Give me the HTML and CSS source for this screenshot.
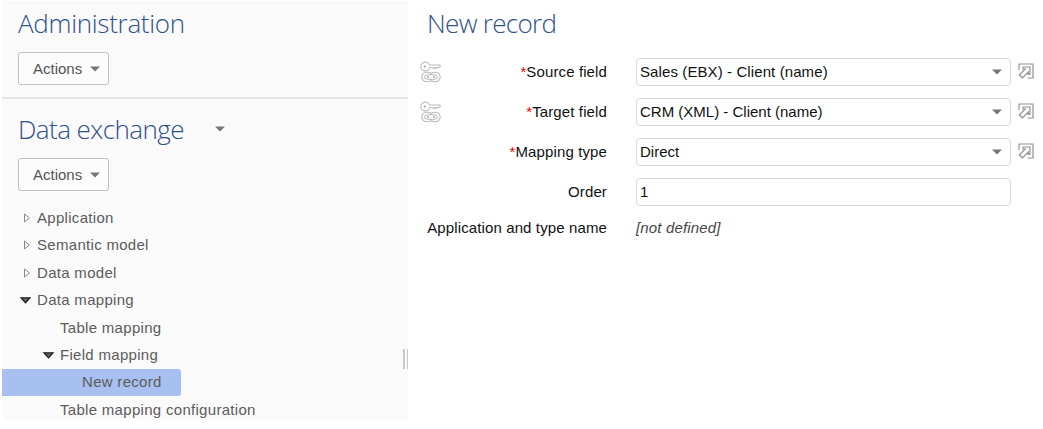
FILE: index.html
```
<!DOCTYPE html>
<html lang="en">
<head>
<meta charset="utf-8">
<title>Data exchange</title>
<link rel="stylesheet" href="styles.css">
</head>
<body>
<svg width="0" height="0" class="defs">
  <symbol id="caret" viewBox="0 0 10 6"><path d="M0 0.5h10L5 5.5z" fill="#777"/></symbol>
  <symbol id="closed" viewBox="0 0 8 10"><path d="M1.5 1v8L6.5 5z" fill="#fff" stroke="#888"/></symbol>
  <symbol id="open" viewBox="0 0 11 7"><path d="M1 .8h9L5.500 5.800z" fill="#666" stroke="#222" stroke-width="1.300"/></symbol>
  <symbol id="key" viewBox="0 0 22 22">
    <g fill="none" stroke="#bbb" stroke-width="1.100">
      <path d="M9.500 4H19.500L20.500 5L19 6.500H17.500L16.500 7.500L15.500 6.500L14 7.500L12.500 6.500H9.700A4.500 4.500 0 1 1 9.500 4z"/>
      <path d="M11 12.300C9.800 11.500 8.500 11.300 6.500 11.300A4.700 4.700 0 0 0 6.500 20.700C8.500 20.700 9.800 20.500 11 19.700C12.200 20.500 13.500 20.700 15.500 20.700A4.700 4.700 0 0 0 15.500 11.300C13.500 11.300 12.200 11.500 11 12.300z"/>
      <ellipse cx="11" cy="16" rx="6.300" ry="2.500"/>
    </g>
    <path d="M3.800 4.500h2v2h-2zM7 15.300h2v1.400H7zM13 15.300h2v1.400h-2z" fill="#aaa"/>
  </symbol>
  <symbol id="goto" viewBox="0 0 16 16">
    <g fill="none" stroke="#929292" stroke-width="1.200">
      <path d="M1 7V1H15V15H9.500"/>
      <path d="M5 4H12V11.500H10.300V9L4.500 14.800L1.300 11.800L7.200 6H5z"/>
    </g>
  </symbol>
</svg>
<div class="app">
  <aside class="sidebar">
    <section class="admin">
      <h1 class="title title-admin">Administration</h1>
      <button class="actions">Actions<svg class="caret"><use href="#caret"/></svg></button>
    </section>
    <section class="exchange">
      <h1 class="title title-exchange">Data exchange<svg class="caret"><use href="#caret"/></svg></h1>
      <button class="actions">Actions<svg class="caret"><use href="#caret"/></svg></button>
    </section>
    <nav class="tree">
      <div class="node"><svg class="closed"><use href="#closed"/></svg>Application</div>
      <div class="node"><svg class="closed"><use href="#closed"/></svg>Semantic model</div>
      <div class="node"><svg class="closed"><use href="#closed"/></svg>Data model</div>
      <div class="node"><svg class="open"><use href="#open"/></svg>Data mapping</div>
      <div class="node level-2">Table mapping</div>
      <div class="node level-2"><svg class="open"><use href="#open"/></svg>Field mapping</div>
      <div class="node level-3"><span class="selected">New record</span></div>
      <div class="node level-2">Table mapping configuration</div>
    </nav>
    <div class="grip"></div>
  </aside>
  <main class="main">
    <h1 class="title title-record">New record</h1>
    <div class="row"><svg class="key"><use href="#key"/></svg><label><b>*</b>Source field</label><div class="field sales"><span>Sales (EBX) - Client (name)</span><svg class="caret"><use href="#caret"/></svg></div><svg class="goto"><use href="#goto"/></svg></div>
    <div class="row"><svg class="key"><use href="#key"/></svg><label><b>*</b>Target field</label><div class="field"><span>CRM (XML) - Client (name)</span><svg class="caret"><use href="#caret"/></svg></div><svg class="goto"><use href="#goto"/></svg></div>
    <div class="row"><i></i><label><b>*</b>Mapping type</label><div class="field"><span>Direct</span><svg class="caret"><use href="#caret"/></svg></div><svg class="goto"><use href="#goto"/></svg></div>
    <div class="row"><i></i><label>Order</label><div class="field">1</div></div>
    <div class="row last"><i></i><label>Application and type name</label><em>[not defined]</em></div>
  </main>
</div>
</body>
</html>
```
FILE: styles.css
```
* { box-sizing: border-box; }
body { margin: 0; background: #fff; font: 15px/20px "Liberation Sans", Arial, sans-serif; overflow: hidden; }
.defs { position: absolute; }
.app { display: flex; height: 429px; padding: 1px 0 9px 2px; white-space: nowrap; }
.sidebar { position: relative; flex: none; width: 406px; height: 419px; background: #fafafa; color: #5c5c5c; overflow: hidden; }
.title { margin: 0; font: 300 26px/36px "Open Sans", "Noto Sans", sans-serif; letter-spacing: -.3px; color: #31508c; }
.admin { height: 98px; padding: 4px 0 0 16px; border-bottom: 2px solid #e5e5e5; }
.exchange { height: 105px; padding: 12px 0 0 16px; }
.title-exchange { display: flex; align-items: center; gap: 31px; letter-spacing: -.55px; }
.caret { width: 10px; height: 6px; flex: none; }
.actions { display: flex; align-items: center; gap: 8px; width: 91px; height: 33px; margin-top: 11px; padding: 1px 0 0 14px; border: 1px solid #c0c0c0; border-radius: 3px; background: #fcfcfc; color: #555; font: 15px/20px "Liberation Sans", Arial, sans-serif; }
.tree { letter-spacing: .3px; }
.node { display: flex; align-items: center; height: 27.5px; padding-left: 21px; }
.closed { width: 8px; height: 10px; margin-right: 6px; }
.open { width: 11px; height: 7px; margin: 0 6px 0 -3px; }
.level-2 { padding-left: 58px; }
.level-2 .open { margin-left: -17px; }
.level-3 { padding: 0; }
.selected { width: 179px; height: 27px; padding: 3px 0 0 80px; border-radius: 0 3px 3px 0; background: #a8c0f0; }
.grip { position: absolute; left: 401px; top: 348px; width: 6px; height: 20px; border: solid #c8c8c8; border-width: 0 2px; }
.main { flex: 1; padding: 4px 0 0 12px; background: #fff; color: #111; }
.title-record { padding-left: 7px; height: 47px; letter-spacing: -.7px; }
.row { display: grid; grid-template-columns: 6px 181px 404px 32px; align-items: center; height: 40px; }
.row label { text-align: right; letter-spacing: .12px; }
.row b { color: #e00; font-weight: 400; }
.key { width: 22px; height: 22px; }
.field { display: flex; justify-content: space-between; align-items: center; width: 375px; height: 28px; margin-left: 29px; padding: 0 8px 0 3px; border: 1px solid #d8d8d8; border-radius: 4px; }
.sales { letter-spacing: .1px; }
.goto { width: 16px; height: 16px; margin: -2px 0 0 7px; }
.last { height: 32px; }
.row em { margin-left: 29px; color: #444; letter-spacing: .15px; }
```
